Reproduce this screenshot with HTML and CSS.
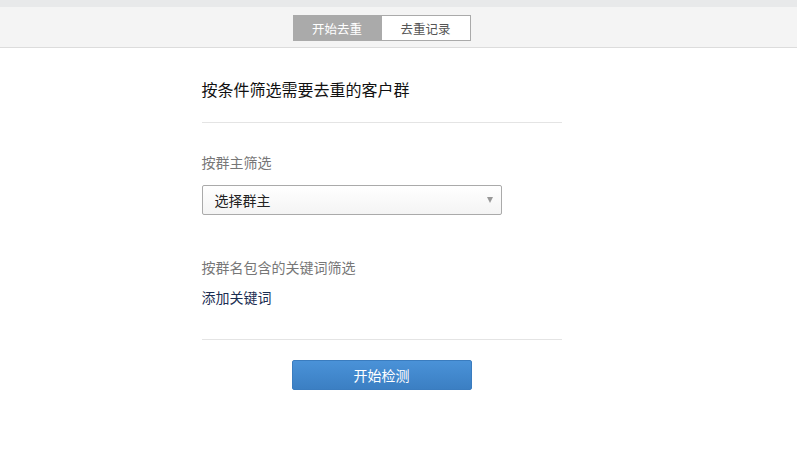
FILE: index.html
```html
<!DOCTYPE html>
<html lang="zh-CN">
<head>
<meta charset="utf-8">
<title>客户群去重</title>
<link rel="stylesheet" href="styles.css">
</head>
<body>
<div class="topstrip"></div>
<header class="header">
  <div class="wrap header-inner">
    <nav class="tabs">
      <a class="tab tab-active">开始去重</a>
      <a class="tab">去重记录</a>
    </nav>
  </div>
</header>
<div class="wrap">
  <main class="panel">
    <h1 class="title">按条件筛选需要去重的客户群</h1>
    <section class="field owner">
      <div class="label">按群主筛选</div>
      <div class="select">
        <span>选择群主</span>
        <span class="arrow"></span>
      </div>
    </section>
    <section class="field keywords">
      <div class="label">按群名包含的关键词筛选</div>
      <a class="add">添加关键词</a>
    </section>
    <div class="actions">
      <button class="btn">开始检测</button>
    </div>
  </main>
</div>
</body>
</html>
```
FILE: styles.css
```css
* { box-sizing: border-box; }
html, body { margin: 0; padding: 0; background: #fff; }
body {
  font-family: "Noto Sans CJK SC", "Noto Sans", "Liberation Sans", sans-serif;
  color: #222;
}
.wrap { width: 763px; }
.topstrip { height: 7px; background: #e8e9ea; }
.header {
  height: 41px;
  background: #f4f4f4;
  border-bottom: 1px solid #dcdcdc;
}
.header-inner {
  display: flex;
  justify-content: center;
  padding-top: 8px;
}
.tabs {
  display: flex;
  height: 26px;
}
.tab {
  width: 89px;
  height: 26px;
  display: flex;
  align-items: center;
  justify-content: center;
  font-size: 12.5px;
  color: #555;
  background: #fff;
  border: 1px solid #aaa;
  border-left: none;
}
.tab-active {
  background: #aaa;
  color: #fff;
  border-left: 1px solid #aaa;
}
.panel {
  width: 360px;
  margin: 0 auto;
  padding-top: 29px;
}
.title {
  margin: 0;
  font-size: 16px;
  font-weight: normal;
  line-height: 24px;
  color: #111;
  padding-bottom: 21px;
  border-bottom: 1px solid #e4e4e4;
}
.field { display: flex; flex-direction: column; }
.owner { padding-top: 27px; }
.label {
  font-size: 14px;
  line-height: 24px;
  color: #777;
}
.select {
  margin-top: 11px;
  width: 300px;
  height: 30px;
  border: 1px solid #aaa;
  border-radius: 2px;
  background: linear-gradient(#fff, #f4f4f4);
  display: flex;
  align-items: center;
  justify-content: space-between;
  padding: 0 8px 0 12px;
  font-size: 14px;
  color: #222;
}
.arrow {
  width: 0; height: 0;
  border-left: 3.5px solid transparent;
  border-right: 3.5px solid transparent;
  border-top: 6px solid #999;
}
.keywords { padding-top: 40px; padding-bottom: 30px; border-bottom: 1px solid #e4e4e4; }
.add {
  margin-top: 6px;
  font-size: 14px;
  line-height: 24px;
  color: #1c2e52;
}
.actions {
  display: flex;
  justify-content: center;
  padding-top: 20px;
}
.btn {
  width: 180px;
  height: 30px;
  border: 1px solid #3a7cbf;
  border-radius: 2px;
  background: linear-gradient(#4a92d8, #3b7fc3);
  color: #fff;
  font-family: inherit;
  font-size: 14px;
  padding: 0;
}
```
